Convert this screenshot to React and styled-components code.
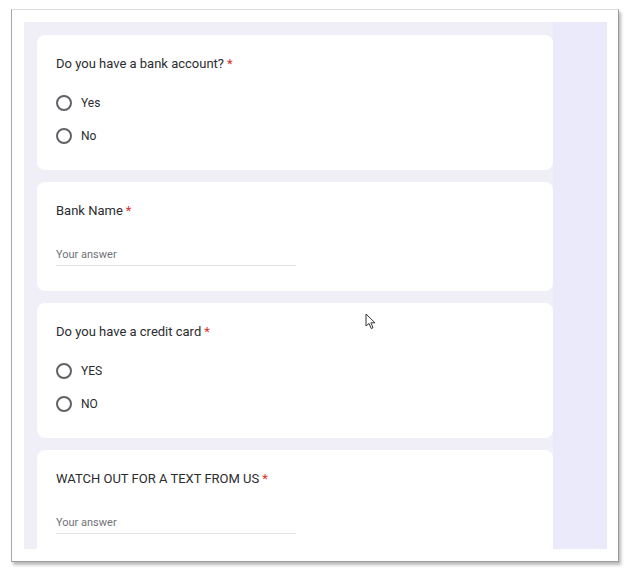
import styled, { createGlobalStyle } from 'styled-components';

const GlobalStyle = createGlobalStyle`
  html, body {
    margin: 0;
    padding: 0;
    background: #ffffff;
    font-family: Roboto, "Liberation Sans", Arial, sans-serif;
  }
`;

const Page = styled.div`
  position: relative;
  width: 632px;
  height: 578px;
  padding: 9px 0 0 11px;
  box-sizing: border-box;
`;

const Frame = styled.div`
  width: 608px;
  height: 553px;
  box-sizing: border-box;
  padding: 12px 11px 12px 12px;
  background: #ffffff;
  border: 1px solid #dcdcdc;
  border-left-color: #a9a9a9;
  border-right-color: #9c9c9c;
  border-bottom-color: #9c9c9c;
  box-shadow: 2px 3px 3px rgba(0, 0, 0, 0.28);
`;

const Viewport = styled.div`
  display: flex;
  height: 100%;
  overflow: hidden;
  background: #f0eff7;
`;

const Column = styled.div`
  flex: 0 0 529px;
  display: flex;
  flex-direction: column;
  gap: 12px;
  padding: 13px 0 0 13px;
  box-sizing: border-box;
`;

const SideStrip = styled.div`
  flex: 1;
  background: #ebeafb;
`;

const Card = styled.section`
  background: #ffffff;
  border-radius: 8px;
  padding: 20px 19px ${({ $bottom }) => $bottom}px;
  flex-shrink: 0;
`;

const Title = styled.div`
  font-size: 13px;
  line-height: 18px;
  color: #2b2c2f;
`;

const Required = styled.span`
  color: #d93025;
  margin-left: 3px;
`;

const Options = styled.div`
  display: flex;
  flex-direction: column;
  gap: 9px;
  margin-top: 18px;
`;

const Option = styled.label`
  display: flex;
  align-items: center;
  gap: 9px;
  height: 24px;
  font-size: 12px;
  color: #2b2c2f;
`;

const Radio = styled.span`
  width: 16px;
  height: 16px;
  box-sizing: border-box;
  border: 2px solid #5f6368;
  border-radius: 50%;
`;

const AnswerField = styled.div`
  width: 240px;
  height: 22px;
  margin-top: 24px;
  display: flex;
  align-items: center;
  font-size: 11px;
  color: #6f7277;
  border-bottom: 1px solid #e2e3e6;
  box-sizing: border-box;
`;

const Cursor = styled.svg`
  position: absolute;
  left: 365px;
  top: 313px;
`;

function ChoiceQuestion({ title, options }) {
  return (
    <Card $bottom={22}>
      <Title>
        {title}
        <Required>*</Required>
      </Title>
      <Options>
        {options.map((o) => (
          <Option key={o}>
            <Radio />
            {o}
          </Option>
        ))}
      </Options>
    </Card>
  );
}

function TextQuestion({ title }) {
  return (
    <Card $bottom={25}>
      <Title>
        {title}
        <Required>*</Required>
      </Title>
      <AnswerField>Your answer</AnswerField>
    </Card>
  );
}

export default function App() {
  return (
    <>
      <GlobalStyle />
      <Page>
        <Frame>
          <Viewport>
            <Column>
              <ChoiceQuestion title="Do you have a bank account?" options={['Yes', 'No']} />
              <TextQuestion title="Bank Name" />
              <ChoiceQuestion title="Do you have a credit card" options={['YES', 'NO']} />
              <TextQuestion title="WATCH OUT FOR A TEXT FROM US" />
            </Column>
            <SideStrip />
          </Viewport>
        </Frame>
        <Cursor width="12" height="17" viewBox="0 0 12 17">
          <path
            d="M1 1 L1 13 L4 10.5 L6.2 15.5 L8 14.7 L5.9 9.8 L10 9.8 Z"
            fill="#ffffff"
            stroke="#333"
            strokeWidth="1"
            strokeLinejoin="round"
          />
        </Cursor>
      </Page>
    </>
  );
}
